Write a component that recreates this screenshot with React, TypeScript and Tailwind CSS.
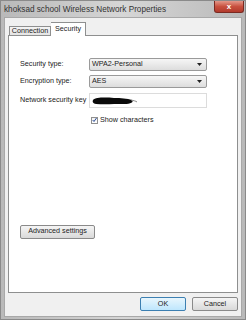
import React, { useState } from "react";

const font = { fontFamily: '"Liberation Sans", Arial, sans-serif' };

function Select({ value }: { value: string }) {
  return (
    <div className="flex h-[13px] w-[118px] items-center justify-between rounded-[2px] border border-[#9a9a9a] bg-gradient-to-b from-[#f6f6f6] to-[#dddddd] pl-[2px] pr-[4px]">
      <span className="text-[7.2px] text-[#222]">{value}</span>
      <svg width="5" height="3" viewBox="0 0 5 3">
        <path d="M0 0 L5 0 L2.5 3 Z" fill="#222" />
      </svg>
    </div>
  );
}

export default function App() {
  const [show, setShow] = useState(true);

  return (
    <div
      className="flex h-[320px] w-[246px] flex-col bg-gradient-to-r from-[#b9b9b9] via-[#d6d6d6] to-[#b9b9b9] border border-[#8a8a8a]"
      style={font}
    >
      <div className="flex h-[16px] items-start justify-between">
        <span className="mt-[3px] ml-[3px] text-[8.2px] text-[#333]">
          khoksad school Wireless Network Properties
        </span>
        <button className="mr-[1px] flex h-[12px] w-[30px] items-center justify-center rounded-b-[3px] border border-t-0 border-[#7a2a22] bg-gradient-to-b from-[#e3978a] via-[#c8503f] to-[#b23a2c] text-[8px] font-bold text-white">
          x
        </button>
      </div>

      <div className="mx-[3px] mb-[2px] flex flex-1 flex-col border border-[#a8a8a8] bg-[#f0f0f0] px-[3px] pt-[4px]">
        <div className="flex items-end pl-[1px]">
          <div className="mb-[-1px] flex h-[10px] w-[42px] items-center justify-center border border-b-0 border-[#8e8f8f] bg-gradient-to-b from-[#f4f4f4] to-[#e2e2e2] text-[7.2px] text-[#222]">
            Connection
          </div>
          <div className="relative z-10 mb-[-1px] flex h-[14px] w-[35px] items-start justify-center border border-b-0 border-l-0 border-[#8e8f8f] bg-white pt-[1px] text-[7.2px] text-[#222]">
            Security
          </div>
        </div>

        <div className="flex h-[258px] flex-col border border-[#8e8f8f] bg-white pl-[11px] pt-[22px]">
          <div className="grid grid-cols-[69px_118px] items-center gap-y-[4px] text-[7.2px] text-[#222]">
            <span>Security type:</span>
            <Select value="WPA2-Personal" />
            <span>Encryption type:</span>
            <Select value="AES" />
            <span className="mt-[1px]">Network security key</span>
            <div className="mt-[1px] flex h-[15px] items-center border border-[#dcdcdc] bg-white pl-[2px]">
              <svg width="46" height="8" viewBox="0 0 46 8">
                <path
                  d="M1 3 C4 0 14 0.5 22 1 C29 1 35 1.5 40 3 C42 5 39 7 32 7 C22 7 12 7.5 4 7 C1 6.5 0 4.5 1 3 Z"
                  fill="#0a0a0a"
                />
                <path d="M39 3 C41 3.5 44 4 45 5" stroke="#888" strokeWidth="1" fill="none" />
              </svg>
            </div>
            <span />
            <label className="mt-[3px] flex items-center gap-[2px] pl-[2px]">
              <span
                onClick={() => setShow(!show)}
                className="flex h-[7px] w-[7px] items-center justify-center border border-[#8f8f8f] bg-gradient-to-b from-[#f2f2f2] to-[#ffffff]"
              >
                {show && (
                  <svg width="6" height="6" viewBox="0 0 6 6">
                    <path d="M0.8 3 L2.4 4.8 L5.4 0.6" stroke="#2a4c96" strokeWidth="1.2" fill="none" />
                  </svg>
                )}
              </span>
              <span>Show characters</span>
            </label>
          </div>

          <button className="mt-[99px] flex h-[14px] w-[75px] items-center justify-center rounded-[2px] border border-[#8a8a8a] bg-gradient-to-b from-[#f5f5f5] to-[#d9d9d9] text-[7.2px] text-[#222]">
            Advanced settings
          </button>
        </div>

        <div className="mt-[4px] flex justify-end gap-[6px]">
          <button className="flex h-[14px] w-[46px] items-center justify-center rounded-[2px] border border-[#3c7fb1] bg-gradient-to-b from-[#e8f6fd] to-[#bee6fd] text-[7.2px] text-[#222]">
            OK
          </button>
          <button className="flex h-[14px] w-[46px] items-center justify-center rounded-[2px] border border-[#8a8a8a] bg-gradient-to-b from-[#f5f5f5] to-[#d9d9d9] text-[7.2px] text-[#222]">
            Cancel
          </button>
        </div>
      </div>
    </div>
  );
}
